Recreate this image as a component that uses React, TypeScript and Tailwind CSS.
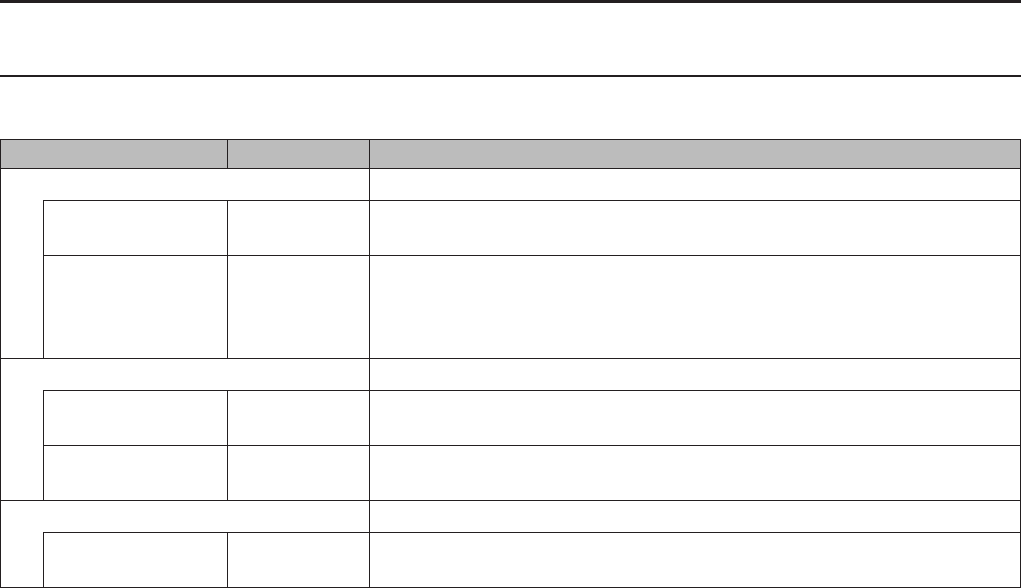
export default function App() {
  return (
    <div className="w-[1021px] h-[588px] bg-white overflow-hidden">
      <div className="h-[3px] bg-[#231f20]" />
      <div className="h-[72px]" />
      <div className="h-[2px] bg-[#231f20]" />
      <div className="h-[62px]" />

      {/* spec table — gap-px on dark background draws the rules */}
      <div className="grid grid-cols-[42px_183px_141px_650px] grid-rows-[28px_31px_54px_102px_31px_54px_54px_31px_54px] gap-px bg-[#231f20] p-px">
        {/* header */}
        <div className="bg-[#bcbcbc] col-span-2" />
        <div className="bg-[#bcbcbc]" />
        <div className="bg-[#bcbcbc]" />

        {/* group 1 */}
        <div className="bg-white col-span-3" />
        <div className="bg-white" />
        <div className="bg-white row-span-2 -mt-px" />
        <div className="bg-white" />
        <div className="bg-white" />
        <div className="bg-white" />
        <div className="bg-white" />
        <div className="bg-white" />
        <div className="bg-white" />

        {/* group 2 */}
        <div className="bg-white col-span-3" />
        <div className="bg-white" />
        <div className="bg-white row-span-2 -mt-px" />
        <div className="bg-white" />
        <div className="bg-white" />
        <div className="bg-white" />
        <div className="bg-white" />
        <div className="bg-white" />
        <div className="bg-white" />

        {/* group 3 */}
        <div className="bg-white col-span-3" />
        <div className="bg-white" />
        <div className="bg-white -mt-px" />
        <div className="bg-white" />
        <div className="bg-white" />
        <div className="bg-white" />
      </div>
    </div>
  );
}
